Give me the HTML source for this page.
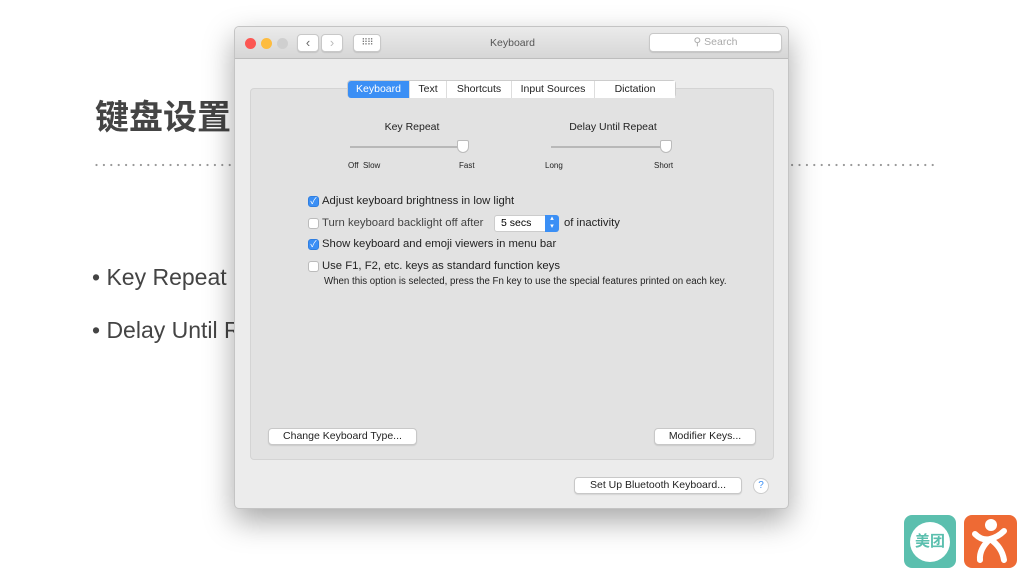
<!DOCTYPE html>
<html><head><meta charset="utf-8"><style>
*{margin:0;padding:0;box-sizing:border-box}
body{width:1024px;height:576px;background:#fff;position:relative;overflow:hidden;font-family:"Liberation Sans","Noto Sans CJK SC",sans-serif}
.abs{position:absolute}
.t{font-size:11.3px;color:#222;white-space:nowrap}
.cb{position:absolute;width:11px;height:11px;border-radius:3px;background:#fff;border:1px solid #bbb}
.cb.on{background:#3b8ff5;border-color:#2f7ee0;color:#fff;font-size:9px;line-height:9px;text-align:center}
.btn{position:absolute;height:17px;background:#fff;border:1px solid #c8c8c8;border-radius:4px;font-size:10.5px;color:#222;text-align:center;line-height:15px;box-shadow:0 1px 1px rgba(0,0,0,.1);white-space:nowrap}
.tab{position:absolute;top:80px;height:17px;font-size:10.5px;line-height:17px;text-align:center;background:#fff;color:#222;border-right:1px solid #ddd;white-space:nowrap}
</style></head><body>
<div class="abs" style="left:95px;top:90px;font-size:34px;font-weight:bold;color:#444">键盘设置</div>
<svg class="abs" style="left:95px;top:163px" width="845" height="4"><line x1="1.5" y1="2" x2="845" y2="2" stroke="#999" stroke-width="2.2" stroke-dasharray="0 7.4" stroke-linecap="round"/></svg>
<div class="abs" style="left:92px;top:264px;font-size:23px;color:#444">• Key Repeat</div>
<div class="abs" style="left:92px;top:317px;font-size:23px;color:#444">• Delay Until Repeat</div>

<div class="abs" style="left:234px;top:26px;width:555px;height:483px;background:#ececec;border:1px solid #c4c4c4;border-radius:5px;box-shadow:0 12px 30px rgba(0,0,0,.35);overflow:hidden">
 <div class="abs" style="left:0;top:0;width:555px;height:32px;background:linear-gradient(#ebebeb,#d6d6d6);border-bottom:1px solid #bdbdbd"></div>
 <div class="abs" style="left:10px;top:11px;width:11px;height:11px;border-radius:50%;background:#fc5753"></div>
 <div class="abs" style="left:26px;top:11px;width:11px;height:11px;border-radius:50%;background:#fdbc40"></div>
 <div class="abs" style="left:42px;top:11px;width:11px;height:11px;border-radius:50%;background:#cfcfcf"></div>
 <div class="btn" style="left:62px;top:7px;width:22px;height:18px;font-size:13px;color:#666">‹</div>
 <div class="btn" style="left:86px;top:7px;width:22px;height:18px;font-size:13px;color:#bbb">›</div>
 <div class="btn" style="left:118px;top:7px;width:28px;height:18px;font-size:9px;color:#777;letter-spacing:-1px">⠿⠿</div>
 <div class="abs t" style="left:0;width:555px;top:10px;text-align:center;color:#555;font-size:10.5px">Keyboard</div>
 <div class="btn" style="left:414px;top:6px;width:133px;height:19px;color:#aaa;line-height:17px">⚲ Search</div>

 <div class="abs" style="left:15px;top:61px;width:524px;height:372px;background:#e2e2e2;border:1px solid #d4d4d4;border-radius:4px"></div>
 <div class="abs" style="left:112px;top:53px;width:329px;height:18px;border:1px solid #ccc;border-radius:4px;background:#fff;overflow:hidden"></div>
 <div class="tab" style="left:113px;top:54px;width:62px;background:#3b8ff5;color:#fff;border-radius:3px 0 0 3px">Keyboard</div>
 <div class="tab" style="left:175px;top:54px;width:37px">Text</div>
 <div class="tab" style="left:212px;top:54px;width:65px">Shortcuts</div>
 <div class="tab" style="left:277px;top:54px;width:83px">Input Sources</div>
 <div class="tab" style="left:360px;top:54px;width:80px;border:none">Dictation</div>

 <div class="abs t" style="left:114px;top:94px;width:126px;text-align:center;font-size:10.5px">Key Repeat</div>
 <div class="abs t" style="left:305px;top:94px;width:146px;text-align:center;font-size:10.5px">Delay Until Repeat</div>
 <div class="abs" style="left:115px;top:119px;width:118px;height:2px;background:#b8b8b8"></div>
 <div class="abs" style="left:222px;top:113px;width:12px;height:13px;background:#fff;border:1px solid #bbb;border-radius:2px 2px 6px 6px"></div>
 <div class="abs" style="left:316px;top:119px;width:120px;height:2px;background:#b8b8b8"></div>
 <div class="abs" style="left:425px;top:113px;width:12px;height:13px;background:#fff;border:1px solid #bbb;border-radius:2px 2px 6px 6px"></div>
 <div class="abs t" style="left:113px;top:134px;font-size:8px">Off&nbsp; Slow</div>
 <div class="abs t" style="left:224px;top:134px;font-size:8px">Fast</div>
 <div class="abs t" style="left:310px;top:134px;font-size:8px">Long</div>
 <div class="abs t" style="left:419px;top:134px;font-size:8px">Short</div>

 <div class="cb on" style="left:73px;top:169px">✓</div><div class="abs t" style="left:87px;top:168px">Adjust keyboard brightness in low light</div>
 <div class="cb" style="left:73px;top:191px"></div><div class="abs t" style="left:87px;top:190px;color:#444">Turn keyboard backlight off after</div>
 <div class="abs" style="left:259px;top:188px;width:65px;height:17px;background:#fff;border:1px solid #ccc;border-radius:3px;font-size:10.5px;line-height:15px;padding-left:6px">5 secs</div>
 <div class="abs" style="left:310px;top:188px;width:14px;height:17px;background:#3b8ff5;border-radius:0 3px 3px 0;color:#fff;font-size:7px;text-align:center;line-height:8px">▴<br>▾</div>
 <div class="abs t" style="left:329px;top:190px">of inactivity</div>
 <div class="cb on" style="left:73px;top:212px">✓</div><div class="abs t" style="left:87px;top:211px">Show keyboard and emoji viewers in menu bar</div>
 <div class="cb" style="left:73px;top:234px"></div><div class="abs t" style="left:87px;top:233px">Use F1, F2, etc. keys as standard function keys</div>
 <div class="abs t" style="left:89px;top:249px;font-size:9.7px">When this option is selected, press the Fn key to use the special features printed on each key.</div>

 <div class="btn" style="left:33px;top:401px;width:149px">Change Keyboard Type...</div>
 <div class="btn" style="left:419px;top:401px;width:102px">Modifier Keys...</div>
 <div class="btn" style="left:339px;top:450px;width:168px">Set Up Bluetooth Keyboard...</div>
 <div class="abs" style="left:518px;top:451px;width:16px;height:16px;border-radius:50%;background:#fff;border:1px solid #ccc;color:#3b8ff5;font-size:10px;text-align:center;line-height:14px">?</div>
</div>

<div class="abs" style="left:904px;top:515px;width:52px;height:53px;border-radius:8px;background:#5bbfae"></div>
<div class="abs" style="left:910px;top:522px;width:40px;height:40px;border-radius:50%;background:#fff;color:#5bbfae;font-size:15px;font-weight:bold;text-align:center;line-height:40px">美团</div>
<div class="abs" style="left:964px;top:515px;width:53px;height:53px;border-radius:8px;background:#ee6a34"></div>
<svg class="abs" style="left:964px;top:515px" width="53" height="53"><circle cx="27" cy="10" r="6" fill="#fff"/><path d="M11 19 Q18 26 26 24 Q34 22 40 16 M26 24 Q15 34 16 45 M26 24 Q38 32 40 45" stroke="#fff" stroke-width="6" fill="none" stroke-linecap="round"/></svg>
</body></html>
